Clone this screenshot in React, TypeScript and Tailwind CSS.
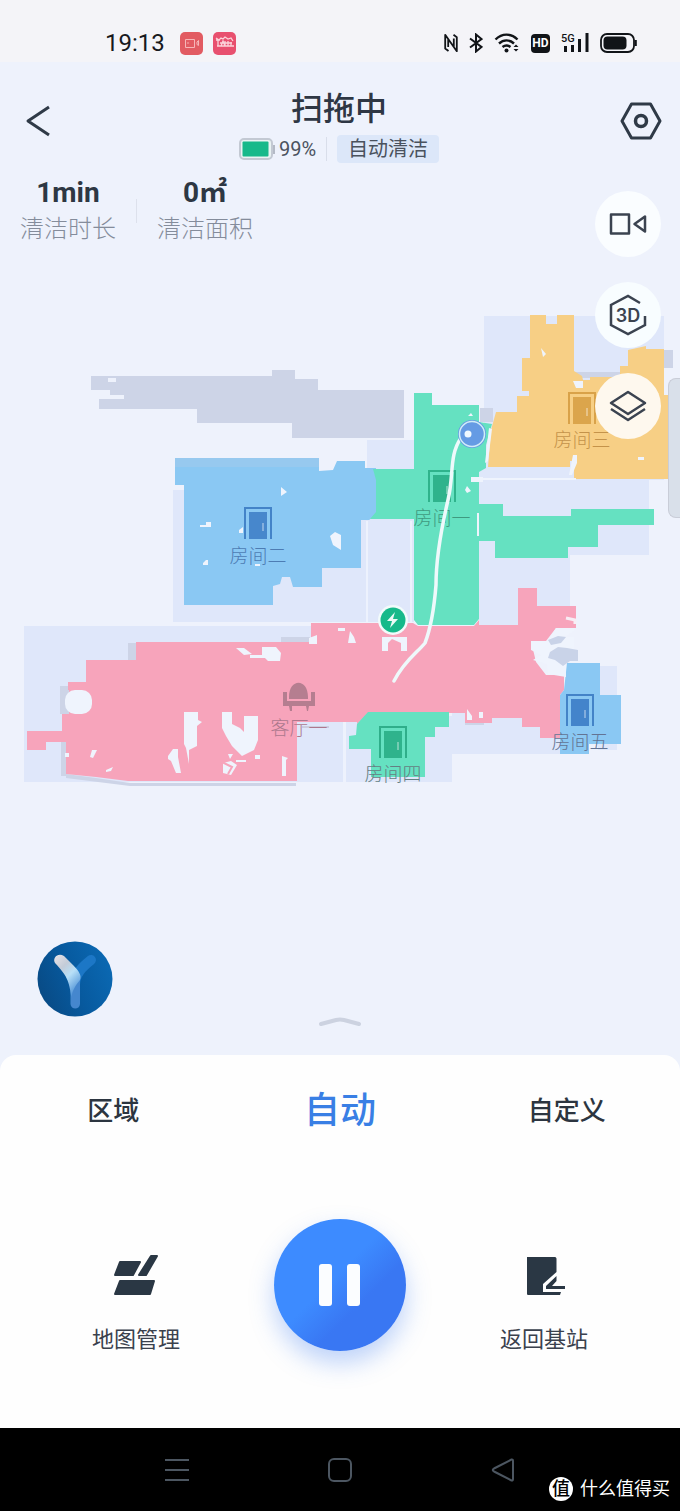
import React from "react";

const cjk = "font-['Roboto','Noto_Sans_CJK_SC',sans-serif]";

function StatusIcons() {
  return (
    <div className="flex items-center gap-[11px] text-[#111418]">
      <svg width="14" height="20" viewBox="0 0 14 20" fill="none" stroke="currentColor" strokeWidth="1.800" strokeLinejoin="round">
        <path d="M4.500 18L1.200 15.500V1.800L9.800 14V5.500M9.500 1.800L12.800 4.200V18.200L4.200 6V14" />
      </svg>
      <svg width="14" height="20" viewBox="0 0 14 20" fill="none" stroke="currentColor" strokeWidth="2">
        <path d="M1 5.500L12.500 14L7 18.500V1.500L12.500 6L1 14.500" />
      </svg>
      <svg width="26" height="20" viewBox="0 0 26 20" fill="none" stroke="currentColor" strokeWidth="2.400">
        <path d="M1.500 6.500C8 0 17 0 23.500 6.500M5 10.500C9.500 6.300 15.500 6.300 20 10.500M8.500 14C11 12 14 12 16.500 14" />
        <circle cx="12.500" cy="17.500" r="2" fill="currentColor" stroke="none" />
        <path d="M19.500 14L22 11.500L24.500 14ZM19.500 16L22 18.500L24.500 16Z" fill="currentColor" stroke="none" />
      </svg>
      <span className="flex h-[19px] w-[19px] items-center justify-center rounded bg-[#111418] text-xs font-bold text-white">HD</span>
      <svg width="28" height="22" viewBox="0 0 28 22" fill="currentColor" className="font-['Roboto',sans-serif]">
        <text x="0" y="10" fontSize="11" fontWeight="500">5G</text>
        <path d="M3 14h3v6H3zM10 13h3v7h-3zM17 7h3v13h-3zM24.500 1h3v19h-3z" />
      </svg>
      <svg width="37" height="20" viewBox="0 0 37 20">
        <rect x="1" y="1" width="33" height="18" rx="6" fill="none" stroke="currentColor" strokeWidth="1.800" />
        <rect x="3.500" y="3.500" width="23" height="13" rx="4" fill="currentColor" />
        <path d="M35.800 7v6" stroke="currentColor" strokeWidth="2" />
      </svg>
    </div>
  );
}

function StatusBar() {
  return (
    <div className="flex h-[62px] items-center bg-[#f4f4f8] pt-6 pr-[43px] pl-[105px]">
      <span className="text-2xl text-[#17191d]">19:13</span>
      <div className="ml-[15px] flex gap-[10px]">
        <svg width="23" height="23" viewBox="0 0 23 23">
          <rect width="23" height="23" rx="5" fill="#e25b62" />
          <path d="M5.500 7.500h9v8h-9zM17 10l1.500-1.500v5L17 12.500z" fill="none" stroke="#f6b6b8" strokeWidth="1" />
          <circle cx="8" cy="11" r="0.800" fill="#f6b6b8" />
        </svg>
        <svg width="23" height="23" viewBox="0 0 23 23">
          <rect width="23" height="23" rx="5" fill="#e8506f" />
          <path d="M3 6l3 2 2-2 2 1 2-2 3 2 3-1 2 3M3 8h4M5 8v6M8 14l2-5 2 5M12 9v5h3M15 9v5M18 10v4M4 14h17M7 11h12" fill="none" stroke="#fbd3da" strokeWidth="1.300" />
        </svg>
      </div>
      <div className="ml-auto">
        <StatusIcons />
      </div>
    </div>
  );
}

function Header() {
  return (
    <header className="flex items-start justify-between px-[18px] pt-6">
      <button aria-label="返回" className="flex h-[70px] w-10 items-center justify-center">
        <svg width="26" height="32" viewBox="0 0 26 32" fill="none" stroke="#2f3a47" strokeWidth="3" strokeLinejoin="round">
          <path d="M24 2L3 16L24 30" />
        </svg>
      </button>
      <div className="flex flex-col items-center">
        <h1 className="text-[32px] leading-[46px] font-medium text-[#2e3744]">扫拖中</h1>
        <div className="mt-[3px] flex h-7 items-center">
          <svg width="36" height="22" viewBox="0 0 36 22">
            <rect x="1" y="1" width="32" height="20" rx="4" fill="#eaf3f3" stroke="#c3c9d3" strokeWidth="2" />
            <path d="M35 7v9" stroke="#b4bac6" strokeWidth="2" />
            <rect x="3.500" y="3.500" width="26" height="15" rx="1" fill="#17b98a" />
          </svg>
          <span className="ml-1 text-xl text-[#4b535f]">99%</span>
          <span className="mx-[10px] h-6 w-px bg-[#d9deea]" />
          <span className="rounded bg-[#dce7f9] px-[11px] text-xl leading-7 text-[#4a525e]">自动清洁</span>
        </div>
      </div>
      <button aria-label="设置" className="flex h-[70px] w-[42px] items-center justify-center">
        <svg width="42" height="38" viewBox="0 0 42 38" fill="none" stroke="#2f3a47" strokeWidth="3" strokeLinejoin="round">
          <path d="M11.500 2h19L40 19l-9.500 17h-19L2 19z" />
          <circle cx="21" cy="19" r="5.500" strokeWidth="3.500" />
        </svg>
      </button>
    </header>
  );
}

function Stat({ value, label }: { value: string; label: string }) {
  return (
    <div className="flex flex-col items-center">
      <dd className="order-1 text-[28px] leading-9 font-bold text-[#2d3743]">{value}</dd>
      <dt className="order-2 text-2xl leading-9 font-light text-[#848c9b]">{label}</dt>
    </div>
  );
}

function Door({ x, y, line, fill }: { x: number; y: number; line: string; fill: string }) {
  return (
    <g transform={`translate(${x} ${y})`}>
      <path d="M-13 16V-15H13V16" fill="none" stroke={line} strokeWidth="2" />
      <rect x="-9" y="-11" width="18" height="27" fill={fill} />
      <path d="M5 0v8" stroke="#ffffff" strokeOpacity="0.450" strokeWidth="1.500" />
    </g>
  );
}

const rooms = [
  { name: "房间一", x: 442, y: 486, line: "#2fb38c", fill: "#2fb38c", text: "#3f9a80", ty: 525 },
  { name: "房间二", x: 258, y: 523, line: "#4383c8", fill: "#4787cc", text: "#4d7cb3", ty: 563 },
  { name: "房间三", x: 582, y: 408, line: "#d9a249", fill: "#dba54c", text: "#c4934a", ty: 447 },
  { name: "房间四", x: 393, y: 742, line: "#2fae8a", fill: "#2fb38c", text: "#647f83", ty: 781 },
  { name: "房间五", x: 580, y: 710, line: "#4383c8", fill: "#4384cb", text: "#637494", ty: 749 },
];

function FloorMap() {
  return (
    <svg viewBox="0 250 680 560" className="block w-full" role="img" aria-label="清洁地图">
      <path
        fill="#dfe7fa"
        d="M484 316H664V480H649V555H570V625H479V467H484ZM367 440H414V622H173V490H367ZM24 626H311V722H343V782H24ZM346 716H452V782H346ZM452 705H565V754H452ZM598 666H617V750H598Z"
      />
      <path d="M367 521V622M411 521V622M344 724V782" stroke="#edf2fd" strokeWidth="2" />
      <path
        fill="#cdd4e7"
        d="M91 376H272V370H295V379H318V390H404V438H292V423H197V409H99V399H110V390H91ZM480 408H493V422H480ZM571 372H622V378H571ZM660 350H673V368H664ZM281 637H310V644H281ZM128 643H137V660H128ZM60 686H70V714H60ZM61 742H67V776H61ZM66 774L96 778L130 783H296V786H130L66 778ZM340 713H365V721H340ZM465 720H484V725H465Z"
      />
      <path d="M108 380h8M108 397h16" stroke="#eef2fc" strokeWidth="4" />
      <path
        fill="#8ac8f3"
        d="M175 458H319V471L333 470L337 461H365V468H376V515L369 520H361V568H322V587H293L290 577H282L280 584L273 586V605H184V485H175Z"
      />
      <path d="M175 458H319V467H175Z" fill="#97c9ef" />
      <path
        fill="#65e1c1"
        d="M414 393H432V405H479V422L492 424L486 445V468L479 472V504H503V516H571V509H654V525H598V547H568V558H495V541H479V619L474 625H418L414 620V519H370L376 512V480L373 469H414Z"
      />
      <path
        fill="#f7cf85"
        d="M530 315H546V324H557V315H574V371L582 376L583 380H590V377H620V366H628V350L646 346V349H664V395H670V479H574V461H570V467H488L491 430L496 412H517V396H529V391H522V358H530Z"
      />
      <path
        fill="#f7a4bb"
        d="M311 623H413L418 626H474L479 620V625H518V588H537V606H576V628H556L546 641H531L536 662L546 675H564V690L560 695V738H540V727H522V718H492V723H465V713H368L357 724V722H297V781H128L96 777L66 774V742H46V750H27V731H62V714H69V690H68V682H86V660H136V642H311Z"
      />
      <path fill="#8ac8f3" d="M567 663H600V695H621V744H589V754H560V695L564 690Z" />
      <path fill="#65e1c1" d="M368 712H449V727H435V737H425V777H371V749H349V736L356 735L357 724Z" />

      <g fill="#eff4fd">
        <rect x="65" y="690" width="27" height="24" rx="10" />
        <path d="M184 712h14v8l4 2-5 4v20l-8 4v14l-3-16-2-4z" />
        <path d="M222 712h10v12l8 4 4 4v-16h14v24l-4 10-12 6-10-10-6-10-4-8z" />
        <path d="M262 647h14l5 6-1 8h-12l-6-6zM236 648h8l8 6-8 1zM250 655h16v3h-16zM309 638l8-3v9h-8zM168 756l5-7h5v8l3 16h-5l-5-12-3-2zM92 750h5l-4 8-3-1zM106 770l7-3-2 4-5 1zM65 753h4v4h-4zM282 756l6 2-2 2v16h-4zM223 763l8-2 6 4-6 10-8-2zM228 754h5l-3 5zM236 760h10v2h-10zM255 755h5v4h-5zM338 628h7v3h-7zM350 631l4 6 2 6h-8zM382 637h25v14h-6v-8l-9-4-4 4v8h-6zM546 656h5l4 2v3h-8zM467 709l5 7v4h-5zM479 712h4v6h-4z" />
        <path d="M556 628h18v3l-10 6h10v18l-8 8v14l-18-3-1-10-14-4 8-5-10-5v-9h17z" />
      </g>
      <path d="M222 762l10 5-4 7" stroke="#f7a4bb" strokeWidth="2" fill="none" />
      <path d="M548 640l10-4 8 1-5 6-10 2zM550 652l8-5 9 1 11 2v11h-8l-7 5-8-6-7-2z" fill="#c9d3e8" />
      <path d="M566 618l9 2v4" fill="none" stroke="#f7edf4" strokeWidth="3" />
      <g fill="#eff4fd">
        <path d="M281 487l6 5-6 4zM200 525h6v-3h5v5h-11zM239 530l4-3v6h-4zM203 563l3-3h2v5h-5zM255 564h5v2h-5zM330 536l5-4 6 3v15l-8-5z" />
        <path d="M471 477h12v5h-12zM477 513h2v23h-2zM465 490l2-4 4 5-4 2zM468 416l3-3 2 3zM573 381h10v7h-7zM573 455h4v8l-5 12h-3zM541 348l5 6-3 3zM638 457h6v3h-6zM489 428l3 1-4 32-3 2z" />
        <path d="M480 478h96v2h-96z" />
      </g>
      <path d="M302 727H329" stroke="#b9b4c5" strokeWidth="1" fill="none" />

      {rooms.map((r) => (
        <g key={r.name}>
          <Door x={r.x} y={r.y} line={r.line} fill={r.fill} />
          <text x={r.x} y={r.ty} fill={r.text} fontSize="19" fontWeight="300" textAnchor="middle">
            {r.name}
          </text>
        </g>
      ))}

      <g fill="#b57e90">
        <path d="M289 697C289 678 308 678 308 697V699H289ZM283 692H287V701H311V692H315V706H283Z" />
        <path d="M289 706h3v5h-2zM306 706h3l-1 5h-1z" />
      </g>
      <text x="299" y="735" fill="#ad788d" fontSize="19" fontWeight="300" textAnchor="middle">
        客厅一
      </text>

      <path d="M461 438C449 455 454 475 448 500C441 530 436 560 436 585C434 610 430 630 425 643C417 653 405 660 394 681" fill="none" stroke="#eef9fb" strokeWidth="3.500" strokeLinecap="round" />
      <circle cx="472" cy="434" r="14" fill="#659be4" />
      <circle cx="472" cy="434" r="12.500" fill="#659be4" stroke="#d1edf7" strokeWidth="1.500" />
      <circle cx="468" cy="434" r="3.500" fill="#eff9ff" />
      <circle cx="393" cy="620" r="15" fill="#f2fbfb" />
      <circle cx="393" cy="620" r="12.500" fill="#17b98a" />
      <path d="M395 612l-8 9h5l-2 7 8-9h-5z" fill="#ecfaf6" />
    </svg>
  );
}

function FloatButton({ label, tone, children }: { label: string; tone: string; children: React.ReactNode }) {
  return (
    <button aria-label={label} className={`flex h-[66px] w-[66px] items-center justify-center rounded-full ${tone}`}>
      {children}
    </button>
  );
}

function MapTools() {
  return (
    <div className="absolute top-7 right-[19px] flex flex-col gap-[25px]">
      <FloatButton label="视频" tone="bg-[#fafdff]">
        <svg width="38" height="24" viewBox="0 0 38 24" fill="none" stroke="#3b4350" strokeWidth="2.500" strokeLinejoin="round">
          <rect x="2" y="2.500" width="18" height="19" />
          <path d="M36 4.500V19.500L25.500 12Z" />
        </svg>
      </FloatButton>
      <FloatButton label="三维地图" tone="bg-[#f8fdff]">
        <svg width="40" height="42" viewBox="0 0 40 42" fill="none" stroke="#3b4350" strokeWidth="2.500">
          <path d="M32 9L20 2L3 11V31L20 40L37 31V22" />
          <text x="20" y="28" fill="#3b4350" stroke="none" fontSize="18" fontWeight="600" textAnchor="middle" className="font-['Inter',sans-serif]">
            3D
          </text>
        </svg>
      </FloatButton>
      <FloatButton label="图层" tone="bg-[#fef8ee]">
        <svg width="38" height="34" viewBox="0 0 38 34" fill="none" stroke="#3b4350" strokeWidth="2.500" strokeLinejoin="round">
          <path d="M19 3L36 14L19 25L2 14Z" />
          <path d="M2 20L19 31L36 20" />
        </svg>
      </FloatButton>
    </div>
  );
}

function AssistantLogo() {
  return (
    <svg width="76" height="76" viewBox="0 0 76 76">
      <defs>
        <linearGradient id="disc" x1="0" y1="0.700" x2="1" y2="0.300">
          <stop offset="0" stopColor="#084a84" />
          <stop offset="0.500" stopColor="#075a9f" />
          <stop offset="1" stopColor="#0b69b3" />
        </linearGradient>
        <linearGradient id="arm" x1="0" y1="0" x2="0.600" y2="1">
          <stop offset="0" stopColor="#e9e4e8" />
          <stop offset="0.350" stopColor="#c4ccd8" />
          <stop offset="0.600" stopColor="#b8e0f8" />
          <stop offset="1" stopColor="#4c91d6" />
        </linearGradient>
      </defs>
      <circle cx="38" cy="38" r="37.500" fill="url(#disc)" />
      <path d="M54 19C45 26 38 33 38 44" fill="none" stroke="#1c77c6" strokeWidth="10" strokeLinecap="round" />
      <path d="M33.500 50V63C34 69 42.500 69 43 63V38Z" fill="#4587ce" />
      <path d="M18 22C15 17 21 11 27 15L36 24C42 30 45 35 43 39C38 45 35 50 34.500 57C32 39 30 35 18 22Z" fill="url(#arm)" />
    </svg>
  );
}

function ControlPanel() {
  return (
    <section className="rounded-t-2xl bg-[#fefefe] pb-[70px]">
      <nav className="grid h-28 grid-cols-3 items-center text-[26px] font-medium text-[#2c3540]">
        <button>区域</button>
        <button className="text-4xl text-[#397fe5]" aria-current="true">自动</button>
        <button>自定义</button>
      </nav>
      <div className="grid grid-cols-3 px-[34px] pt-[52px] text-[22px] text-[#3a414d]">
        <button className="flex flex-col items-center pt-[35px]">
          <svg width="46" height="42" viewBox="0 0 46 42" fill="#2a3744" stroke="#2a3744" strokeWidth="2" strokeLinejoin="round">
            <path d="M7 8H27L20 21H2ZM38 2H44L33 21H26ZM7 27H41L37 40H2Z" />
          </svg>
          <span className="mt-[26px] leading-9">地图管理</span>
        </button>
        <button aria-label="暂停" className="flex h-[132px] w-[132px] items-center justify-center justify-self-center rounded-full bg-linear-to-br from-[#3d8bff] from-45% to-[#3977f3] to-65% shadow-[0_12px_24px_rgba(70,130,240,0.35)]">
          <svg width="42" height="44" viewBox="0 0 42 44" fill="#fbfdff">
            <rect x="0" y="1" width="13" height="42" rx="3" />
            <rect x="28" y="1" width="13" height="42" rx="3" />
          </svg>
        </button>
        <button className="flex flex-col items-center pt-[35px]">
          <svg width="42" height="42" viewBox="0 0 42 42" fill="#2a3744">
            <path d="M4 3H32C33 3 33.500 4 33.500 5V18L20 30V38H38L37 41H5C4 41 4 40 4 39Z" />
            <path d="M33.500 22V27L29 32H42V35H23V32Z" />
          </svg>
          <span className="mt-[26px] leading-9">返回基站</span>
        </button>
      </div>
    </section>
  );
}

function SystemNav() {
  return (
    <footer className="relative h-[83px] bg-black">
      <div className="grid h-full grid-cols-3 items-center px-24">
        <button aria-label="最近任务" className="justify-self-center">
          <svg width="24" height="24" viewBox="0 0 24 24" stroke="#4c5661" strokeWidth="2">
            <path d="M0 2H24M0 12H24M0 22H24" />
          </svg>
        </button>
        <button aria-label="主屏幕" className="justify-self-center">
          <svg width="24" height="24" viewBox="0 0 24 24" fill="none" stroke="#4c5661" strokeWidth="2">
            <rect x="1" y="1" width="22" height="22" rx="5" />
          </svg>
        </button>
        <button aria-label="后退" className="justify-self-center">
          <svg width="24" height="24" viewBox="0 0 24 24" fill="none" stroke="#4c5661" strokeWidth="2" strokeLinejoin="round">
            <path d="M20.500 1.500Q22 1 22 3V21Q22 23 20.500 22.500L3 13.500Q0.500 12 3 10.500Z" />
          </svg>
        </button>
      </div>
      <div className="absolute right-[10px] bottom-[10px] flex items-center gap-[7px] text-white">
        <span className="flex h-6 w-6 items-center justify-center rounded-full bg-white text-lg leading-6 font-medium text-black">值</span>
        <span className="text-lg leading-6">什么值得买</span>
      </div>
    </footer>
  );
}

export default function App() {
  return (
    <div className={`flex min-h-screen flex-col bg-[#eef2fc] ${cjk}`}>
      <StatusBar />
      <Header />
      <main className="relative grow">
        <dl className="flex items-center px-5 pt-3 pb-[3px]">
          <Stat value="1min" label="清洁时长" />
          <span className="mx-5 h-6 w-px bg-[#dde1ec]" />
          <Stat value="0㎡" label="清洁面积" />
        </dl>
        <div className="relative">
          <FloorMap />
          <div className="absolute top-[128px] right-0 h-[140px] w-3 rounded-l-lg border border-r-0 border-[#c9cdd8] bg-[#d9e0ea]" />
        </div>
        <MapTools />
        <div className="px-[37px] pt-[131px]">
          <button aria-label="语音助手" className="block">
            <AssistantLogo />
          </button>
        </div>
        <button aria-label="展开" className="mx-auto block pb-7">
          <svg width="44" height="10" viewBox="0 0 44 10" fill="none" stroke="#ccd2e0" strokeWidth="4" strokeLinecap="round" strokeLinejoin="round">
            <path d="M3 7L18 3Q22 2 26 3L41 7" />
          </svg>
        </button>
      </main>
      <ControlPanel />
      <SystemNav />
    </div>
  );
}
